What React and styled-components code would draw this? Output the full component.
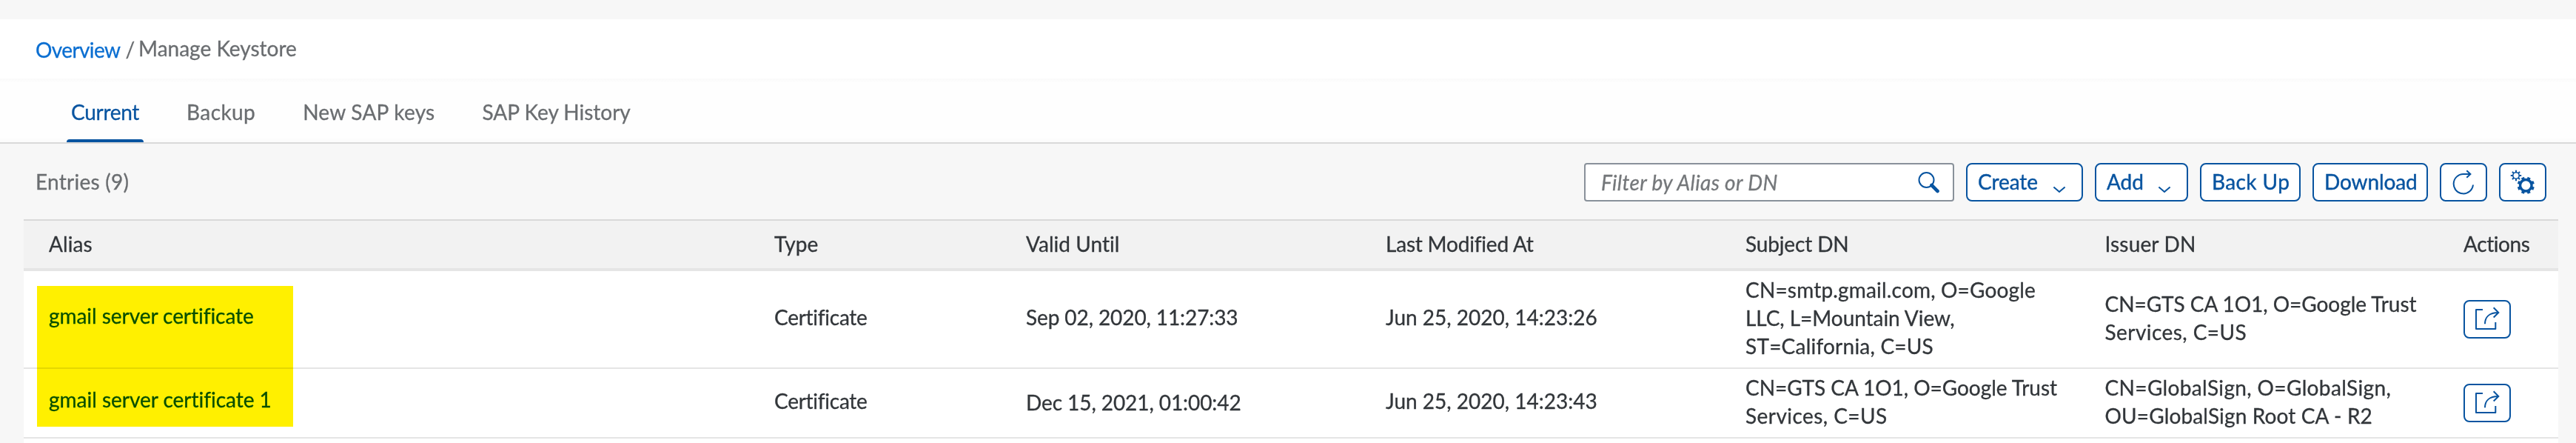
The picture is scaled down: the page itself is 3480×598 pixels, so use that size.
import React from "react";
import styled, { createGlobalStyle } from "styled-components";

const BLUE = "#0854a0";

const GlobalStyle = createGlobalStyle`
  * { box-sizing: border-box; }
  body {
    margin: 0;
    background: #f7f7f7;
    color: #32363a;
    font: 28px/38px Lato, "Noto Sans", sans-serif;
    font-variant-ligatures: none;
    -webkit-text-stroke: 0.3px currentColor;
  }
`;

const Page = styled.main`
  width: 3480px;
  height: 598px;
  overflow: hidden;
  display: flex;
  flex-direction: column;
  padding-top: 26px;
`;

const Label = styled.span`
  display: block;
  white-space: nowrap;
  letter-spacing: ${(p) => p.$ls || 0}px;
`;

const Breadcrumbs = styled.nav`
  flex: none;
  height: 80px;
  padding: 20px 0 0 48px;
  display: flex;
  align-items: flex-start;
  background: #fff;
  color: #6a6d70;
`;

const Crumb = styled(Label)`
  padding-top: 0;
`;

const CrumbLink = styled(Crumb).attrs({ as: "a" })`
  padding-top: 2px;
  color: #0a6ed1;
`;

const Separator = styled(Label)`
  padding: 1px 5px 0 7px;
`;

const TabBar = styled.div`
  flex: none;
  height: 88px;
  padding: 26px 0 0 90px;
  display: flex;
  gap: 52px;
  background: linear-gradient(#fafafa, #fefefe 6px, #fefefe 80px, #fcfcfc 82px, #fcfcfc);
  border-bottom: 2px solid #d9d9d9;
`;

const Tab = styled.div`
  height: 60px;
  padding: 0 6px;
  color: ${(p) => (p.$active ? BLUE : "#6a6d70")};
  position: relative;
  ${(p) =>
    p.$active &&
    `
    &::after {
      content: "";
      position: absolute;
      left: 0;
      right: 0;
      bottom: 0;
      height: 4px;
      background: ${BLUE};
      border-radius: 4px 4px 0 0;
    }
  `}
`;

const Toolbar = styled.div`
  flex: none;
  height: 102px;
  padding: 26px 40px 0 48px;
  display: flex;
  align-items: flex-start;
  gap: 16px;
`;

const Title = styled(Label)`
  flex: 1;
  padding-top: 6px;
  color: #6a6d70;
`;

const SearchField = styled.div`
  width: 500px;
  height: 52px;
  padding: 0 18px 1px 21px;
  display: flex;
  align-items: center;
  justify-content: space-between;
  background: #fff;
  border: 2px solid #89919a;
  border-radius: 4px;
  color: #74777a;
  font-style: italic;
`;

const Button = styled.button`
  width: ${(p) => p.$w}px;
  height: 52px;
  padding: 0 0 2px 14px;
  display: flex;
  align-items: center;
  gap: ${(p) => p.$gap || 0}px;
  background: #fff;
  border: 2px solid ${BLUE};
  border-radius: 8px;
  color: ${BLUE};
  font: inherit;
  -webkit-text-stroke: 0.4px ${BLUE};
`;

const IconButton = styled(Button).attrs({ $w: 64 })`
  padding: 0;
  > svg { margin: -2px; }
`;

const Glyph = styled.svg`
  display: block;
  flex: none;
  fill: none;
  stroke: ${BLUE};
  stroke-width: 2;
`;

const Table = styled.section`
  position: relative;
  flex: 1;
  margin: 0 24px 0 32px;
  background: #fff;
`;

const Row = styled.div`
  display: grid;
  grid-template-columns: 980px 340px 486px 486px 485.5px 484.5px 1fr;
  align-items: center;
  padding-left: 34px;
  height: ${(p) => p.$h}px;
  border-bottom: 2px solid #e5e5e5;
`;

const HeaderRow = styled(Row).attrs({ $h: 70 })`
  background: #f2f2f2;
  border-top: 2px solid #d9d9d9;
  border-bottom-width: 4px;
`;

const Cell = styled.div`
  padding-bottom: ${(p) => p.$up ?? 5}px;
`;

const AliasText = styled(Label)`
  color: ${BLUE};
`;

const Highlight = styled.div`
  position: absolute;
  left: 18px;
  top: 90px;
  width: 346px;
  height: 190px;
  background: #fff000;
  mix-blend-mode: multiply;
`;

const SearchIcon = () => (
  <Glyph width="30" height="30" viewBox="0 0 30 30">
    <circle cx="12.5" cy="12" r="10" />
    <path d="M19.5 19L27.5 27" strokeWidth="4.6" strokeLinecap="round" style={{ strokeWidth: 4.6 }} />
  </Glyph>
);

const Chevron = () => (
  <Glyph width="18" height="30" viewBox="0 0 18 30">
    <path d="M1.4 22.4L9 29L16.6 22.4" />
  </Glyph>
);

const RefreshIcon = () => (
  <Glyph width="64" height="52" viewBox="0 0 64 52">
    <path d="M45 29.5A13.2 13.2 0 1 1 32 15H41M36.3 10.3L41.4 15L36.3 19.7" />
  </Glyph>
);

const teeth = [0, 45, 90, 135, 180, 225, 270, 315];

const Gear = ({ x, y, r, ring, tooth, offset }) => (
  <g transform={`translate(${x} ${y}) rotate(${offset})`}>
    <circle r={r} strokeWidth={ring} />
    {teeth.map((a) => (
      <path key={a} d={`M0 ${-r}V${-r - ring / 2 - 2.2}`} strokeWidth={tooth} transform={`rotate(${a})`} />
    ))}
  </g>
);

const SettingsIcon = () => (
  <Glyph width="64" height="52" viewBox="0 0 64 52">
    <Gear x={36.3} y={30.3} r={7.7} ring={3.4} tooth={4.2} offset={22.5} />
    <Gear x={23} y={17} r={4.2} ring={1.6} tooth={2} offset={0} />
  </Glyph>
);

const ShareIcon = () => (
  <Glyph width="64" height="52" viewBox="0 0 64 52">
    <path d="M26 13H17V39H43.3V30" strokeLinejoin="round" />
    <path d="M29 32.3C29 23 35 17 47 17M40.7 10.3L47.3 17L40.7 23.5" />
  </Glyph>
);

const tabs = [
  ["Current", -0.3, true],
  ["Backup", 0.4],
  ["New SAP keys", 0.25],
  ["SAP Key History", 0],
];

const headers = [
  ["Alias", 0.1],
  ["Type", 0.09],
  ["Valid Until", 0.04],
  ["Last Modified At", -0.2],
  ["Subject DN", -0.14],
  ["Issuer DN", 0.16],
  ["Actions", -0.4],
];

const rows = [
  {
    h: 132,
    alias: ["gmail server certificate", -0.05],
    aliasUp: 10,
    type: "Certificate",
    typeUp: 6,
    valid: ["Sep 02, 2020, 11:27:33", -0.1],
    validUp: 6,
    modified: ["Jun 25, 2020, 14:23:26", 0],
    subject: [
      ["CN=smtp.gmail.com, O=Google", 0.18],
      ["LLC, L=Mountain View,", -0.05],
      ["ST=California, C=US", 0.22],
    ],
    issuer: [
      ["CN=GTS CA 1O1, O=Google Trust", -0.04],
      ["Services, C=US", 0.44],
    ],
  },
  {
    h: 94,
    alias: ["gmail server certificate 1", -0.02],
    aliasUp: 11,
    type: "Certificate",
    typeUp: 6,
    valid: ["Dec 15, 2021, 01:00:42", -0.08],
    validUp: 2,
    modified: ["Jun 25, 2020, 14:23:43", 0],
    subject: [
      ["CN=GTS CA 1O1, O=Google Trust", -0.04],
      ["Services, C=US", 0.44],
    ],
    issuer: [
      ["CN=GlobalSign, O=GlobalSign,", 0.36],
      ["OU=GlobalSign Root CA - R2", 0.14],
    ],
  },
];

const Lines = ({ items }) => (
  <Cell>
    {items.map(([t, ls]) => (
      <Label key={t} $ls={ls}>{t}</Label>
    ))}
  </Cell>
);

export default function App() {
  return (
    <>
      <GlobalStyle />
      <Page>
        <Breadcrumbs>
          <CrumbLink $ls={-0.6}>Overview</CrumbLink>
          <Separator>/</Separator>
          <Crumb $ls={0}>Manage Keystore</Crumb>
        </Breadcrumbs>
        <TabBar>
          {tabs.map(([t, ls, active]) => (
            <Tab key={t} $active={active}>
              <Label $ls={ls}>{t}</Label>
            </Tab>
          ))}
        </TabBar>
        <Toolbar>
          <Title $ls={0.25}>Entries (9)</Title>
          <SearchField>
            <Label $ls={0.35}>Filter by Alias or DN</Label>
            <SearchIcon />
          </SearchField>
          <Button $w={158} $gap={20}>
            <Label $ls={-0.1}>Create</Label>
            <Chevron />
          </Button>
          <Button $w={126} $gap={19}>
            <Label $ls={-0.1}>Add</Label>
            <Chevron />
          </Button>
          <Button $w={136}><Label $ls={0.4}>Back Up</Label></Button>
          <Button $w={156}><Label $ls={-0.1}>Download</Label></Button>
          <IconButton><RefreshIcon /></IconButton>
          <IconButton><SettingsIcon /></IconButton>
        </Toolbar>
        <Table>
          <HeaderRow>
            {headers.map(([t, ls]) => (
              <Cell key={t} $up={3}><Label $ls={ls}>{t}</Label></Cell>
            ))}
          </HeaderRow>
          {rows.map((r) => (
            <Row key={r.alias[0]} $h={r.h}>
              <Cell $up={r.aliasUp}><AliasText $ls={r.alias[1]}>{r.alias[0]}</AliasText></Cell>
              <Cell $up={r.typeUp}><Label $ls={-0.27}>{r.type}</Label></Cell>
              <Cell $up={r.validUp}><Label $ls={r.valid[1]}>{r.valid[0]}</Label></Cell>
              <Cell $up={r.typeUp}><Label $ls={r.modified[1]}>{r.modified[0]}</Label></Cell>
              <Lines items={r.subject} />
              <Lines items={r.issuer} />
              <Cell $up={0}><IconButton><ShareIcon /></IconButton></Cell>
            </Row>
          ))}
          <Highlight />
        </Table>
      </Page>
    </>
  );
}
